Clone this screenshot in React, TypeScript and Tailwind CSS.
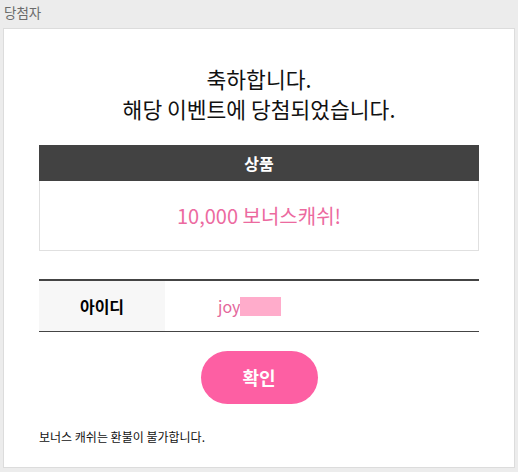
import React from "react";

const font = { fontFamily: '"Noto Sans CJK KR", "Noto Sans", sans-serif' };

const App = () => {
  return (
    <div
      className="w-[518px] h-[472px] bg-[#ececec] px-[3px] overflow-hidden"
      style={font}
    >
      <div className="h-[28px] pl-[1px] text-[13.5px] leading-[24px] text-[#6b6b6b]">
        당첨자
      </div>
      <div className="h-[440px] bg-white border border-[#dcdcdc] px-[35px] pt-[35px]">
        <h2 className="text-center text-[21.5px] leading-[30px] text-[#111]">
          축하합니다.
          <br />
          해당 이벤트에 당첨되었습니다.
        </h2>

        <div className="mt-[21px]">
          <div className="h-[36px] bg-[#424242] flex items-center justify-center text-white font-bold text-[16px]">
            상품
          </div>
          <div className="h-[70px] border border-t-0 border-[#e0e0e0] flex items-center justify-center text-[20px] text-[#ec6a9f]">
            10,000 보너스캐쉬!
          </div>
        </div>

        <div className="mt-[28px] border-t-2 border-b border-[#444] flex h-[53px]">
          <div className="w-[126px] bg-[#f7f7f7] flex items-center justify-center font-bold text-[16px] text-black">
            아이디
          </div>
          <div className="flex items-center pl-[53px] text-[16px] text-[#e4679c]">
            <span>joy</span>
            <span className="inline-block w-[41px] h-[19px] bg-[#ffaccb]" />
          </div>
        </div>

        <div className="flex justify-center mt-[19px]">
          <button className="w-[117px] h-[53px] rounded-full bg-[#fd5fa3] text-white font-bold text-[18px]">
            확인
          </button>
        </div>

        <p className="mt-[25px] text-[12px] leading-[16px] text-[#111]">
          보너스 캐쉬는 환불이 불가합니다.
        </p>
      </div>
    </div>
  );
};

export default App;
